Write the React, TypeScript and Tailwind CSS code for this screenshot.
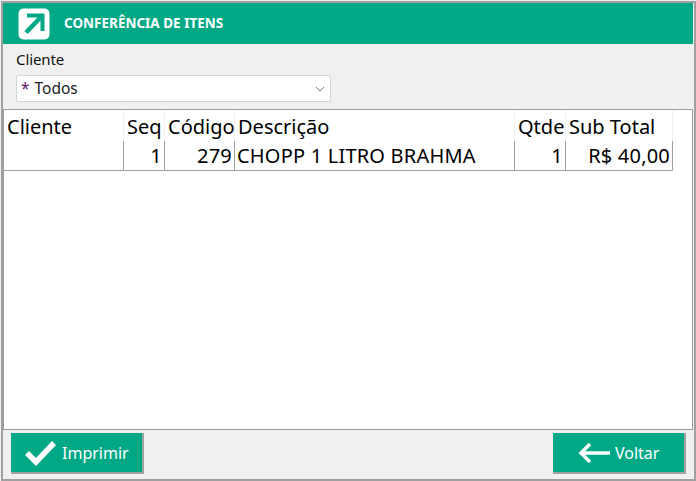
import React from "react";

const cols = [
  { h: "Cliente", v: "", w: "w-[120px]", right: false },
  { h: "Seq", v: "1", w: "w-[41px]", right: true },
  { h: "Código", v: "279", w: "w-[70px]", right: true },
  { h: "Descrição", v: "CHOPP 1 LITRO BRAHMA", w: "w-[280px]", right: false },
  { h: "Qtde", v: "1", w: "w-[51px]", right: true },
  { h: "Sub Total", v: "R$ 40,00", w: "w-[107px]", right: true },
];

export default function App() {
  return (
    <div className="w-[696px] h-[481px] bg-[#f0f0f0] overflow-hidden pt-[1px] pl-[1px] font-['Noto_Sans',sans-serif]">
      <div className="w-[695px] h-[480px] border-2 border-[#a0a0a0] pr-[1px] flex flex-col">
        <div className="h-[41px] bg-[#00a886] flex items-center pl-[15px] gap-[14px] shrink-0">
          <svg width="32" height="32" viewBox="0 0 32 32">
            <rect x="0.5" y="0.5" width="31" height="31" rx="5" fill="#fff" />
            <path d="M9 7.5H24.5V23" fill="none" stroke="#00a886" strokeWidth="4" strokeLinejoin="miter" />
            <path d="M23 9L8 24.5" fill="none" stroke="#00a886" strokeWidth="4.5" />
          </svg>
          <span className="text-white text-[13.5px] font-bold leading-none mt-[1px]">CONFERÊNCIA DE ITENS</span>
        </div>
        <div className="pl-[13px] h-[65px] shrink-0 flex flex-col">
          <div className="text-[15px] leading-[19px] mt-[6px] text-[#111] tracking-[-0.1px]">Cliente</div>
          <div className="mt-[6px] w-[315px] h-[27px] bg-white border border-[#d4d4d4] rounded-[2px] flex items-center pl-[4px] pr-[4px] justify-between">
            <span className="text-[15.5px] text-[#222] mt-[1px]"><span className="text-[#5b1a6e] mr-[5px]">*</span>Todos</span>
            <svg width="10" height="6" viewBox="0 0 10 6" className="mr-[1px]">
              <path d="M1 1l4 4 4-4" fill="none" stroke="#777" strokeWidth="1" />
            </svg>
          </div>
        </div>
        <div className="h-[321px] w-[690px] shrink-0 bg-white border border-[#9a9a9a]">
          <div className="flex h-[31px]">
            {cols.map((c) => (
              <div key={c.h} className={`${c.w} border-r border-[#f0f0f0] pl-[3px] text-[20px] leading-[34px] text-black whitespace-nowrap overflow-hidden`}>
                {c.h}
              </div>
            ))}
          </div>
          <div className="flex h-[30px] w-[669px] border-b border-[#a0a0a0]">
            {cols.map((c) => (
              <div key={c.h} className={`${c.w} border-r border-[#a0a0a0] px-[2px] text-[20px] leading-[30px] text-black whitespace-nowrap tracking-[0.2px] overflow-hidden ${c.right ? "text-right" : "text-left"}`}>
                {c.v}
              </div>
            ))}
          </div>
        </div>
        <div className="flex justify-between items-start pl-[8px] pr-[7px] pt-[3px]">
          <button className="w-[133px] h-[41px] bg-[#00a886] border-b-2 border-r-2 border-[#a0a0a0] flex items-center text-white text-[16px] pl-[13px]">
            <svg width="33" height="28" viewBox="0 0 33 28" className="mr-[5px]">
              <path d="M3 14l9 9L30 4" fill="none" stroke="#fff" strokeWidth="5.5" />
            </svg>
            Imprimir
          </button>
          <button className="w-[133px] h-[41px] bg-[#00a886] border-b-2 border-r-2 border-[#a0a0a0] flex items-center text-white text-[16px] pl-[25px]">
            <svg width="33" height="22" viewBox="0 0 33 22" className="mr-[4px]">
              <path d="M32 11H3M12 2l-9 9 9 9" fill="none" stroke="#fff" strokeWidth="3.5" />
            </svg>
            Voltar
          </button>
        </div>
      </div>
    </div>
  );
}
